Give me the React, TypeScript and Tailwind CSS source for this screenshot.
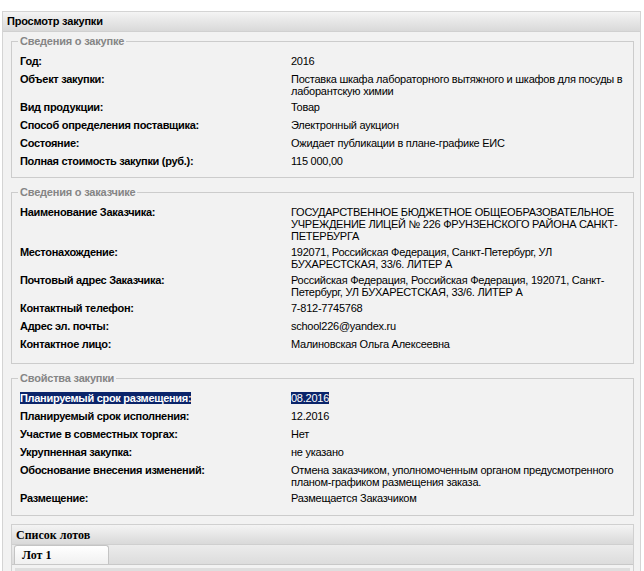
import type { ReactNode } from "react";

type Row = {
  label: string;
  value: string[];
  selected?: boolean;
};

const purchase: Row[] = [
  { label: "Год:", value: ["2016"] },
  {
    label: "Объект закупки:",
    value: [
      "Поставка шкафа лабораторного вытяжного и шкафов для посуды в",
      "лаборантскую химии",
    ],
  },
  { label: "Вид продукции:", value: ["Товар"] },
  { label: "Способ определения поставщика:", value: ["Электронный аукцион"] },
  { label: "Состояние:", value: ["Ожидает публикации в плане-графике ЕИС"] },
  { label: "Полная стоимость закупки (руб.):", value: ["115 000,00"] },
];

const customer: Row[] = [
  {
    label: "Наименование Заказчика:",
    value: [
      "ГОСУДАРСТВЕННОЕ БЮДЖЕТНОЕ ОБЩЕОБРАЗОВАТЕЛЬНОЕ",
      "УЧРЕЖДЕНИЕ ЛИЦЕЙ № 226 ФРУНЗЕНСКОГО РАЙОНА САНКТ-",
      "ПЕТЕРБУРГА",
    ],
  },
  {
    label: "Местонахождение:",
    value: [
      "192071, Российская Федерация, Санкт-Петербург, УЛ",
      "БУХАРЕСТСКАЯ, 33/6. ЛИТЕР А",
    ],
  },
  {
    label: "Почтовый адрес Заказчика:",
    value: [
      "Российская Федерация, Российская Федерация, 192071, Санкт-",
      "Петербург, УЛ БУХАРЕСТСКАЯ, 33/6. ЛИТЕР А",
    ],
  },
  { label: "Контактный телефон:", value: ["7-812-7745768"] },
  { label: "Адрес эл. почты:", value: ["school226@yandex.ru"] },
  { label: "Контактное лицо:", value: ["Малиновская Ольга Алексеевна"] },
];

const props: Row[] = [
  { label: "Планируемый срок размещения:", value: ["08.2016"], selected: true },
  { label: "Планируемый срок исполнения:", value: ["12.2016"] },
  { label: "Участие в совместных торгах:", value: ["Нет"] },
  { label: "Укрупненная закупка:", value: ["не указано"] },
  {
    label: "Обоснование внесения изменений:",
    value: [
      "Отмена заказчиком, уполномоченным органом предусмотренного",
      "планом-графиком размещения заказа.",
    ],
  },
  { label: "Размещение:", value: ["Размещается Заказчиком"] },
];

function Section({ title, rows, pb }: { title: string; rows: Row[]; pb: string }) {
  return (
    <fieldset className={`border border-[#cccccc] pl-[8px] pr-[8px] ${pb}`}>
      <legend className="ml-[-2px] px-[2px] font-bold text-[#858585] leading-[13px] tracking-[-0.2px]">
        {title}
      </legend>
      <div className="pt-[5px]">
        {rows.map((r) => (
          <div key={r.label} className="flex min-h-[18px] py-[2px] leading-[12px]">
            <div className="w-[271px] shrink-0 font-bold tracking-[-0.3px]">
              <span className={r.selected ? "bg-[#0a246a] text-white" : ""}>{r.label}</span>
            </div>
            <div className="whitespace-nowrap tracking-[-0.25px]">
              {r.value.map((line, i) => (
                <div key={i}>
                  <span className={r.selected ? "bg-[#0a246a] text-white" : ""}>{line}</span>
                </div>
              ))}
            </div>
          </div>
        ))}
      </div>
    </fieldset>
  );
}

function Bar({ children, className = "" }: { children: ReactNode; className?: string }) {
  return (
    <div
      className={`h-[20px] bg-gradient-to-b from-[#f4f4f4] to-[#d9d9d9] flex items-center ${className}`}
    >
      {children}
    </div>
  );
}

export default function App() {
  return (
    <div className="w-[644px] h-[571px] overflow-hidden bg-white pt-[11px] pl-[2px] text-[11px] text-black font-['Liberation_Sans',Arial,sans-serif]">
      <div className="w-[639px] h-[600px] border border-[#d4d4d4] bg-[#f2f2f2]">
        <Bar className="px-[4px] border-b border-[#d0d0d0]">
          <span className="font-bold tracking-[-0.2px]">Просмотр закупки</span>
        </Bar>
        <div className="pl-[8px] pr-[6px] pt-[3px] flex flex-col gap-[8px]">
          <Section title="Сведения о закупке" rows={purchase} pb="pb-[6px]" />
          <Section title="Сведения о заказчике" rows={customer} pb="pb-[9px]" />
          <Section title="Свойства закупки" rows={props} pb="pb-[7px]" />
          <div className="border border-[#d0d0d0] bg-[#f2f2f2]">
            <Bar className="px-[4px] border-b border-[#cfcfcf]">
              <span className="font-bold font-['Liberation_Serif',serif] text-[12px]">Список лотов</span>
            </Bar>
            <div className="h-[20px] bg-gradient-to-b from-[#ececec] to-[#dcdcdc] border-b border-[#c8c8c8] flex items-end pl-[2px]">
              <div className="w-[95px] h-[19px] border border-b-0 border-[#c4c4c4] rounded-t-[3px] bg-gradient-to-b from-white to-[#f0f0f0] px-[7px] flex items-center">
                <span className="font-bold font-['Liberation_Serif',serif] text-[12px]">Лот 1</span>
              </div>
            </div>
            <div className="mx-[3px] mt-[3px] h-[20px] bg-[#dedede]" />
          </div>
        </div>
      </div>
    </div>
  );
}
